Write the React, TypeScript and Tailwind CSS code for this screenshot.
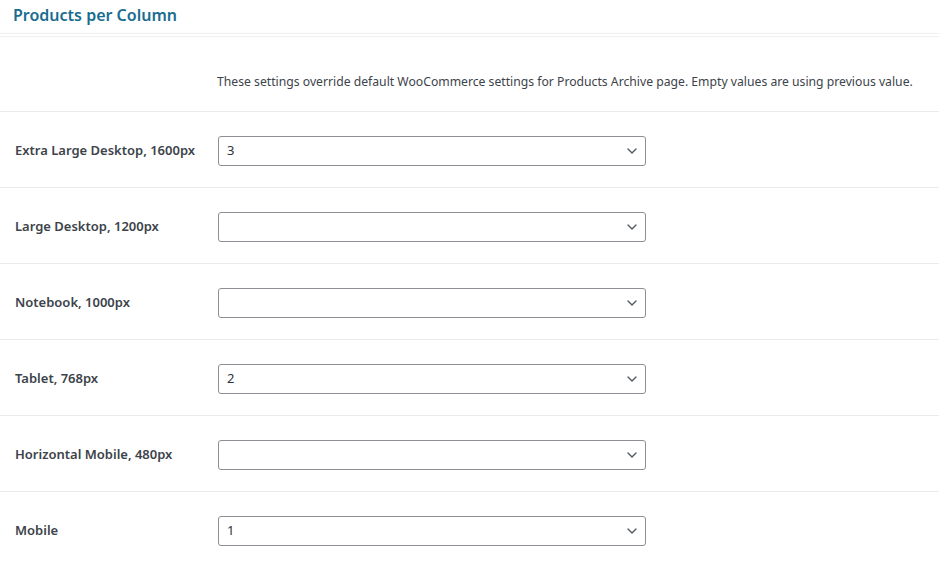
import { ChevronDown } from "lucide-react";

const rows = [
  { label: "Extra Large Desktop, 1600px", value: "3" },
  { label: "Large Desktop, 1200px", value: "" },
  { label: "Notebook, 1000px", value: "" },
  { label: "Tablet, 768px", value: "2" },
  { label: "Horizontal Mobile, 480px", value: "" },
  { label: "Mobile", value: "1" },
];

export default function App() {
  return (
    <div
      className="w-[939px] h-[574px] bg-white overflow-hidden text-[#3c434a]"
      style={{ fontFamily: '"Noto Sans", "Open Sans", sans-serif' }}
    >
      <div className="h-[34px] border-b border-[#f0f0f0] px-[13px] flex items-center">
        <h2 className="text-[16px] font-semibold text-[#1b6d8f] leading-none -mt-[3px]">Products per Column</h2>
      </div>
      <div className="mt-[2px] border-t border-[#f0f0f0]">
        <div className="h-[75px] border-b border-[#ebebeb] flex items-center pl-[217px] pt-[16px]">
          <p className="text-[12.2px]">
            These settings override default WooCommerce settings for Products Archive page. Empty values are using previous value.
          </p>
        </div>
        {rows.map((row) => (
          <div key={row.label} className="h-[76px] border-b border-[#ebebeb] last:border-b-0 last:pb-[1px] flex items-center">
            <label className="w-[218px] pl-[15px] text-[13px] font-semibold text-[#3c434a] pt-[2px]">{row.label}</label>
            <div className="w-[428px] h-[30px] border border-[#8c8f94] rounded-[3px] flex items-center justify-between pl-[8px] pr-[5px] mt-[3px]">
              <span className="text-[13px] text-[#2c3338]">{row.value}</span>
              <ChevronDown size={16} strokeWidth={2} className="text-[#50575e]" />
            </div>
          </div>
        ))}
      </div>
    </div>
  );
}
